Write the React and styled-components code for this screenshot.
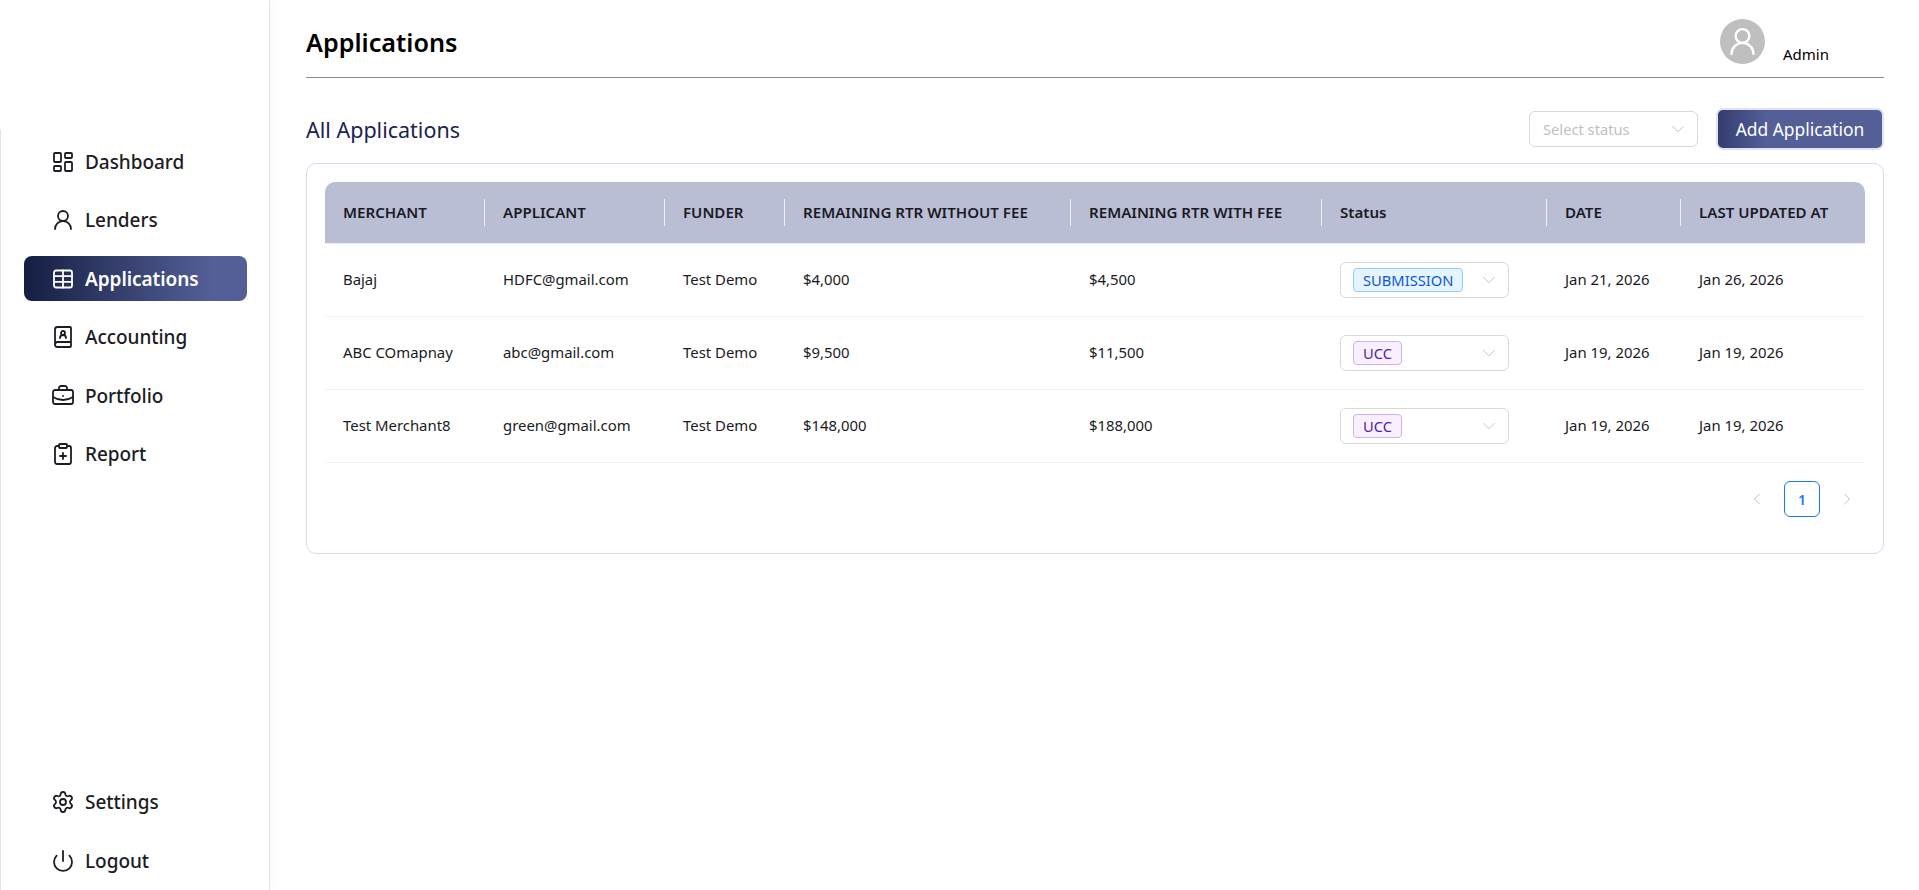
import styled, { createGlobalStyle } from "styled-components"
import { LayoutDashboard, UserRound, BookUser, BriefcaseBusiness, ClipboardPlus, Settings, Power, ChevronDown, ChevronLeft, ChevronRight } from "lucide-react"

function TableGrid({ size, strokeWidth }) {
  return (
    <svg width={size} height={size} viewBox="0 0 24 24" fill="none" stroke="currentColor" strokeWidth={strokeWidth} strokeLinecap="round" strokeLinejoin="round">
      <rect x="3" y="3.5" width="18" height="17" rx="2" />
      <path d="M3 9.2h18M3 14.8h18M12 3.5v17" />
    </svg>
  )
}

const navTop = [
  { label: "Dashboard", icon: LayoutDashboard },
  { label: "Lenders", icon: UserRound },
  { label: "Applications", icon: TableGrid, active: true },
  { label: "Accounting", icon: BookUser },
  { label: "Portfolio", icon: BriefcaseBusiness },
  { label: "Report", icon: ClipboardPlus },
]

const navBottom = [
  { label: "Settings", icon: Settings },
  { label: "Logout", icon: Power },
]

const columns = [
  { title: "MERCHANT", width: 160 },
  { title: "APPLICANT", width: 180 },
  { title: "FUNDER", width: 120 },
  { title: "REMAINING RTR WITHOUT FEE", width: 286 },
  { title: "REMAINING RTR WITH FEE", width: 251 },
  { title: "Status", width: 225 },
  { title: "DATE", width: 134 },
  { title: "LAST UPDATED AT", width: 184 },
]

const rows = [
  { merchant: "Bajaj", applicant: "HDFC@gmail.com", funder: "Test Demo", without: "$4,000", withFee: "$4,500", status: "SUBMISSION", date: "Jan 21, 2026", updated: "Jan 26, 2026" },
  { merchant: "ABC COmapnay", applicant: "abc@gmail.com", funder: "Test Demo", without: "$9,500", withFee: "$11,500", status: "UCC", date: "Jan 19, 2026", updated: "Jan 19, 2026" },
  { merchant: "Test Merchant8", applicant: "green@gmail.com", funder: "Test Demo", without: "$148,000", withFee: "$188,000", status: "UCC", date: "Jan 19, 2026", updated: "Jan 19, 2026" },
]

const GlobalStyle = createGlobalStyle`
  html, body {
    margin: 0;
    background: #fff;
    font-family: "Noto Sans", "Open Sans", sans-serif;
    color: #1a1a1a;
  }
  * { box-sizing: border-box; }
`

const Layout = styled.div`
  display: flex;
  height: 890px;
  overflow: hidden;
`

const Sidebar = styled.aside`
  width: 270px;
  flex-shrink: 0;
  height: 890px;
  padding: 129px 0 0;
  border-right: 1px solid #e6e6e6;
  box-shadow: 3px 0 8px rgba(0, 0, 0, 0.03);
`

const SideInner = styled.div`
  height: 761px;
  border-left: 1px solid #e4e4ec;
  padding: 10px 22px 0 23px;
  display: flex;
  flex-direction: column;
  justify-content: space-between;
`

const NavGroup = styled.nav`
  display: flex;
  flex-direction: column;
  gap: 13.6px;
  padding-bottom: ${p => p.$bottom || 0}px;
`

const NavItem = styled.a`
  display: flex;
  align-items: center;
  gap: 10px;
  height: 45px;
  padding-left: 27px;
  border-radius: 8px;
  font-size: 19px;
  font-weight: ${p => (p.$active ? 600 : 500)};
  letter-spacing: -0.05px;
  color: ${p => (p.$active ? "#fff" : "#1c1c24")};
  background: ${p => (p.$active ? "linear-gradient(90deg, #151f42 0%, #545f98 85%)" : "transparent")};
`

const Main = styled.main`
  flex: 1;
  padding: 0 35px 0 36px;
`

const TopBar = styled.header`
  height: 78px;
  border-bottom: 1px solid #8c8c8c;
  display: flex;
  justify-content: space-between;
  align-items: flex-start;
`

const PageTitle = styled.h1`
  margin: 22px 0 0;
  font-size: 25.2px;
  line-height: 40px;
  font-weight: 600;
  color: #000;
`

const Profile = styled.div`
  display: flex;
  align-items: flex-end;
  gap: 18px;
  margin: 19px 55px 0 0;
`

const Avatar = styled.div`
  width: 45px;
  height: 45px;
  border-radius: 50%;
  background: #bfbfbf;
  color: #fff;
  display: flex;
  align-items: center;
  justify-content: center;
`

const ProfileName = styled.span`
  font-size: 15px;
  line-height: 20px;
  color: #000;
`

const ToolRow = styled.div`
  display: flex;
  align-items: center;
  justify-content: space-between;
  height: 85px;
  padding-top: 17px;
`

const SectionTitle = styled.h2`
  margin: 0;
  font-size: 21.5px;
  font-weight: 400;
  color: #1a2450;
`

const Tools = styled.div`
  display: flex;
  align-items: center;
  gap: 18px;
`

const FilterSelect = styled.div`
  width: 169px;
  height: 36px;
  border: 1px solid #d9d9d9;
  border-radius: 6px;
  padding: 0 8px 0 13px;
  display: flex;
  align-items: center;
  justify-content: space-between;
  font-size: 14.7px;
  color: #bfbfbf;
`

const AddButton = styled.button`
  width: 168px;
  height: 42px;
  border: 2px solid #dfe3f3;
  border-radius: 7px;
  background: linear-gradient(90deg, #333d70 0%, #545f98 30%);
  color: #fff;
  font: inherit;
  font-size: 17.4px;
  padding: 0;
`

const Card = styled.section`
  height: 391px;
  border: 1px solid #d8d8f5;
  border-radius: 10px;
  padding: 18px;
`

const Table = styled.table`
  width: 1540px;
  border-collapse: separate;
  border-spacing: 0;
  table-layout: fixed;
`

const HeadCell = styled.th`
  position: relative;
  height: 62px;
  padding: 0 18px 2px;
  background: #babed5;
  background-clip: padding-box;
  border-bottom: 1px solid #f0f0f0;
  text-align: left;
  font-size: 15.1px;
  font-weight: 600;
  color: #1a1a24;
  white-space: nowrap;

  &:first-child { border-top-left-radius: 10px; }
  &:last-child { border-top-right-radius: 10px; }
  &:not(:last-child)::after {
    content: "";
    position: absolute;
    right: 0;
    top: 17px;
    height: 27px;
    width: 1px;
    background: #f0f0f0;
  }
`

const Cell = styled.td`
  height: 73px;
  padding: 0 18px 2px;
  border-bottom: 1px solid #f0f0f0;
  font-size: 14.9px;
  color: #1a1a24;
  white-space: nowrap;
`

const StatusCell = styled(Cell)`
  padding-bottom: 0;
`

const StatusSelect = styled.div`
  width: 169px;
  height: 36px;
  border: 1px solid #d9d9d9;
  border-radius: 6px;
  padding: 0 8px 0 12px;
  display: flex;
  align-items: center;
  justify-content: space-between;
  color: #bfbfbf;
`

const StatusTag = styled.span`
  height: 24px;
  display: inline-flex;
  align-items: center;
  padding: 0 9px;
  border-radius: 4px;
  font-size: 14.7px;
  border: 1px solid ${p => (p.$status === "UCC" ? "#d3adf7" : "#91caff")};
  background: ${p => (p.$status === "UCC" ? "#f9f0ff" : "#e6f4ff")};
  color: ${p => (p.$status === "UCC" ? "#531dab" : "#0958d9")};
`

const Pager = styled.div`
  display: flex;
  justify-content: flex-end;
  align-items: center;
  gap: 17px;
  margin-top: 18px;
  padding-right: 8px;
  color: #bfbfbf;
`

const PageNumber = styled.span`
  width: 36px;
  height: 36px;
  border: 1px solid #1677ff;
  border-radius: 6px;
  display: flex;
  align-items: center;
  justify-content: center;
  font-size: 14px;
  font-weight: 600;
  color: #1677ff;
`

function NavLink({ item }) {
  const Icon = item.icon
  return (
    <NavItem $active={item.active}>
      <Icon size={24} strokeWidth={1.8} />
      {item.label}
    </NavItem>
  )
}

export default function App() {
  return (
    <Layout>
      <GlobalStyle />
      <Sidebar>
        <SideInner>
          <NavGroup>
            {navTop.map(item => <NavLink key={item.label} item={item} />)}
          </NavGroup>
          <NavGroup $bottom={7}>
            {navBottom.map(item => <NavLink key={item.label} item={item} />)}
          </NavGroup>
        </SideInner>
      </Sidebar>
      <Main>
        <TopBar>
          <PageTitle>Applications</PageTitle>
          <Profile>
            <Avatar><UserRound size={33} strokeWidth={1.7} /></Avatar>
            <ProfileName>Admin</ProfileName>
          </Profile>
        </TopBar>
        <ToolRow>
          <SectionTitle>All Applications</SectionTitle>
          <Tools>
            <FilterSelect>Select status <ChevronDown size={22} strokeWidth={1} /></FilterSelect>
            <AddButton>Add Application</AddButton>
          </Tools>
        </ToolRow>
        <Card>
          <Table>
            <colgroup>
              {columns.map(col => <col key={col.title} width={col.width} />)}
            </colgroup>
            <thead>
              <tr>
                {columns.map(col => <HeadCell key={col.title}>{col.title}</HeadCell>)}
              </tr>
            </thead>
            <tbody>
              {rows.map(row => (
                <tr key={row.merchant}>
                  <Cell>{row.merchant}</Cell>
                  <Cell>{row.applicant}</Cell>
                  <Cell>{row.funder}</Cell>
                  <Cell>{row.without}</Cell>
                  <Cell>{row.withFee}</Cell>
                  <StatusCell>
                    <StatusSelect>
                      <StatusTag $status={row.status}>{row.status}</StatusTag>
                      <ChevronDown size={22} strokeWidth={1} />
                    </StatusSelect>
                  </StatusCell>
                  <Cell>{row.date}</Cell>
                  <Cell>{row.updated}</Cell>
                </tr>
              ))}
            </tbody>
          </Table>
          <Pager>
            <ChevronLeft size={20} strokeWidth={1.2} />
            <PageNumber>1</PageNumber>
            <ChevronRight size={20} strokeWidth={1.2} />
          </Pager>
        </Card>
      </Main>
    </Layout>
  )
}
